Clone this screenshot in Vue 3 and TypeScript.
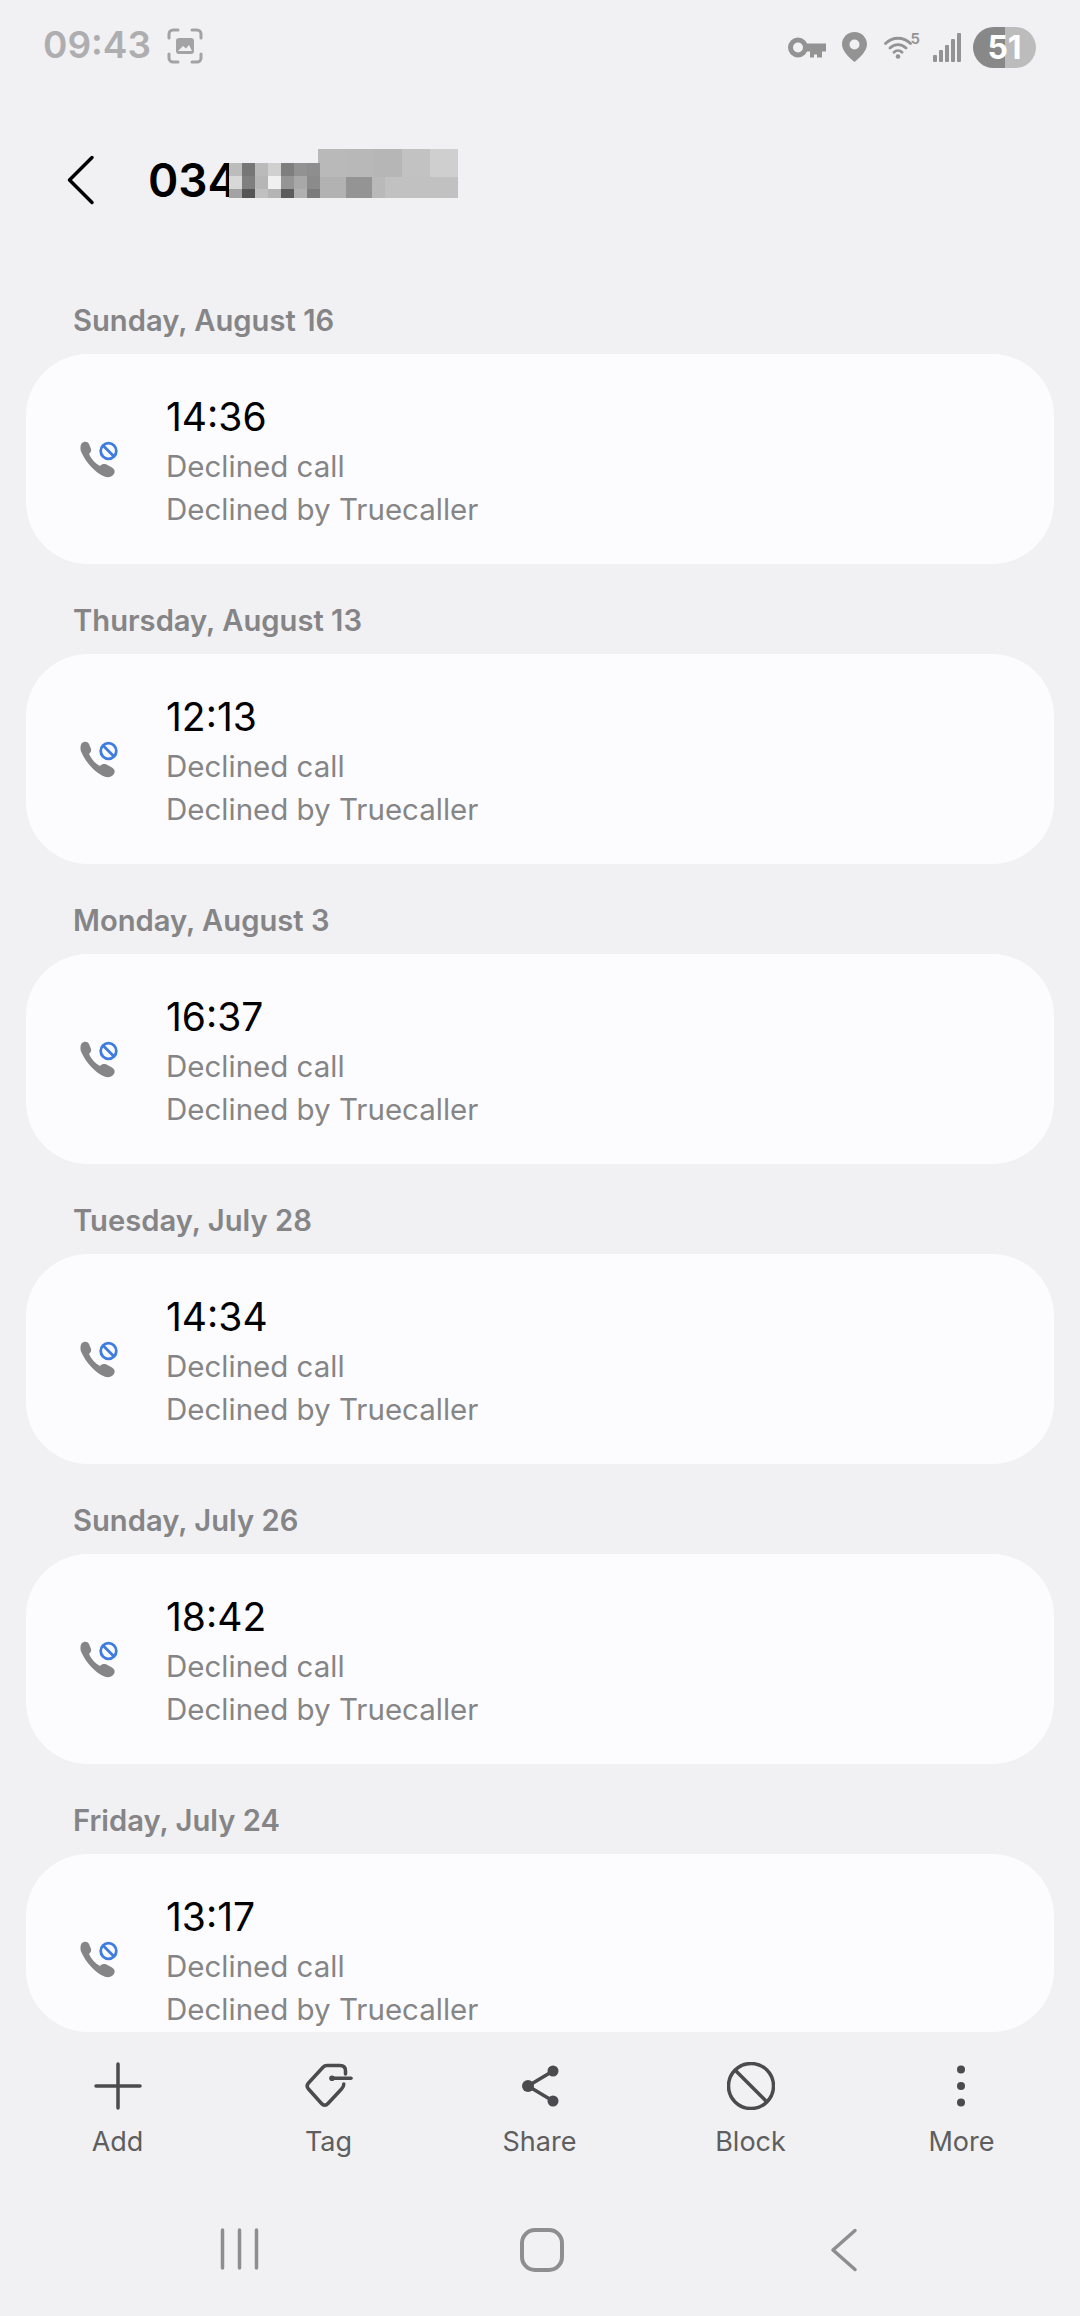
<template>
  <div class="screen">
    <!-- status bar -->
    <div class="status">
      <span class="clock">09:43</span>
      <svg class="shot" width="36" height="36" viewBox="0 0 36 36" fill="none" stroke="#a3a3a5" stroke-width="3" stroke-linecap="round">
        <path d="M2 10V6a4 4 0 0 1 4-4h5M25 2h5a4 4 0 0 1 4 4v4M34 26v4a4 4 0 0 1-4 4h-5M11 34H6a4 4 0 0 1-4-4v-4" />
        <rect x="9" y="10" width="18" height="16" rx="3" fill="#a3a3a5" stroke="none" />
        <path d="M11 23l5-5 3 2.500 3-3.500 3 6z" fill="#f1f1f3" stroke="none" />
      </svg>
      <div class="status-right">
        <svg width="38" height="21" viewBox="0 0 38 21" fill="none">
          <circle cx="10" cy="10.500" r="7.500" stroke="#939393" stroke-width="5" />
          <path d="M17 6.500h21v8h-4v6h-5v-3h-3v3h-4v-6h-5z" fill="#939393" />
        </svg>
        <svg width="25" height="30" viewBox="0 0 25 30">
          <path fill-rule="evenodd" d="M12.500 0C5.600 0 0 5.500 0 12.300 0 19 7 25.500 12.500 30 18 25.500 25 19 25 12.300 25 5.500 19.400 0 12.500 0zm0 7.500a5 5 0 1 1 0 10 5 5 0 0 1 0-10z" fill="#939393" />
        </svg>
        <div class="wifi">
          <svg width="28" height="24" viewBox="0 0 28 24" fill="none" stroke="#939393" stroke-width="2.800" stroke-linecap="round">
            <path d="M1.500 8.500C8.500 1.500 19.500 1.500 26.500 8.500M6 13c4.500-4.500 11.500-4.500 16 0M10 17.200c2.300-2.200 5.700-2.200 8 0" />
            <circle cx="14" cy="21.500" r="2.300" fill="#939393" stroke="none" />
          </svg>
          <span class="wifi-5">5</span>
        </div>
        <svg class="signal" width="28" height="29" viewBox="0 0 28 29">
          <rect x="0" y="22" width="4" height="7" rx="1" />
          <rect x="6" y="17" width="4" height="12" rx="1" />
          <rect x="12" y="12" width="4" height="17" rx="1" />
          <rect x="18" y="6" width="4" height="23" rx="1" />
          <rect x="24" y="0" width="4" height="29" rx="1" />
        </svg>
        <div class="battery"><span>51</span></div>
      </div>
    </div>

    <!-- app bar -->
    <div class="appbar">
      <svg class="back" width="28" height="50" viewBox="0 0 28 50" fill="none" stroke="#000" stroke-width="3.500" stroke-linecap="round" stroke-linejoin="round">
        <path d="M25 2.500 2.500 25 25 47.500" />
      </svg>
      <div class="title">
        <span>034</span>
        <svg class="mosaic" width="229" height="49" viewBox="0 0 229 49" shape-rendering="crispEdges">
          <rect v-for="(b, i) in mosaic" :key="i" :x="b[0]" :y="b[1]" :width="b[2]" :height="b[3]" :fill="b[4]" />
        </svg>
      </div>
    </div>

    <!-- call log -->
    <div class="list">
      <template v-for="(day, i) in days" :key="day.date">
        <div class="date">{{ day.date }}</div>
        <div class="card" :class="{ cut: i === days.length - 1 }">
          <svg class="call-icon" width="40" height="38" viewBox="0 0 40 38">
            <path d="M1.500 2.500C4 0 7.500.3 9 3l2 5c.5 2 0 3-2 5 2.500 5 6 9.500 11 12 2-2 4-2.500 6.500-1.500l5.500 3c3 2 3.500 4.500 1.500 7s-5 3.300-8.500 2.300C15 32 5.500 21 .8 10 .3 7 .3 4.500 1.500 2.500z" fill="#858587" />
            <circle cx="28.500" cy="10" r="7.800" fill="none" stroke="#3f7de0" stroke-width="2.800" />
            <path d="M23 4.500 34 15.500" stroke="#3f7de0" stroke-width="2.800" />
          </svg>
          <div class="entry">
            <div class="time">{{ day.time }}</div>
            <div class="sub">Declined call</div>
            <div class="sub">Declined by Truecaller</div>
          </div>
        </div>
      </template>
    </div>

    <!-- bottom actions -->
    <div class="actions">
      <div class="action">
        <svg width="48" height="48" viewBox="0 0 48 48" fill="none" stroke="#4b4b4f" stroke-width="3.500" stroke-linecap="round">
          <path d="M24 2v44M2 24h44" />
        </svg>
        <span>Add</span>
      </div>
      <div class="action">
        <svg width="48" height="48" viewBox="0 0 48 48" fill="none" stroke="#4b4b4f" stroke-width="3.500" stroke-linecap="round" stroke-linejoin="round">
          <path d="M40.500 12V9c0-3.500-2-5.500-5.500-5.500H22c-1.500 0-2.800.5-4 1.800L3.500 21c-1.800 2-1.800 4 0 6l13 14.500c2 2.200 4.500 2.200 6.500 0L36.500 27c1.500-1.500 2.300-3 2.300-5" />
          <path d="M27 16.300h19" />
          <circle cx="27" cy="16.300" r="2.800" fill="#4b4b4f" stroke="none" />
        </svg>
        <span>Tag</span>
      </div>
      <div class="action">
        <svg width="48" height="48" viewBox="0 0 48 48" fill="#4b4b4f" stroke="#4b4b4f" stroke-width="3.500">
          <path d="M37 9 12 24l25 15" fill="none" />
          <circle cx="37" cy="9" r="5.500" stroke="none" />
          <circle cx="12" cy="24" r="6" stroke="none" />
          <circle cx="37" cy="39" r="5.500" stroke="none" />
        </svg>
        <span>Share</span>
      </div>
      <div class="action">
        <svg width="48" height="48" viewBox="0 0 48 48" fill="none" stroke="#4b4b4f" stroke-width="3.500">
          <circle cx="24" cy="24" r="22.500" />
          <path d="M8 8l32 32" />
        </svg>
        <span>Block</span>
      </div>
      <div class="action">
        <svg width="48" height="48" viewBox="0 0 48 48" fill="#4b4b4f">
          <circle cx="23" cy="7.500" r="4" />
          <circle cx="23" cy="24" r="4" />
          <circle cx="23" cy="40.500" r="4" />
        </svg>
        <span>More</span>
      </div>
    </div>

    <!-- navigation bar -->
    <div class="navbar">
      <svg width="40" height="42" viewBox="0 0 40 42" stroke="#8e8e90" stroke-width="3.500" stroke-linecap="round">
        <path d="M2.500 2v38M19.500 2v38M36.500 2v38" />
      </svg>
      <svg width="44" height="44" viewBox="0 0 44 44" fill="none" stroke="#8e8e90" stroke-width="4">
        <rect x="2" y="2" width="40" height="40" rx="13" />
      </svg>
      <svg width="28" height="44" viewBox="0 0 28 44" fill="none" stroke="#8e8e90" stroke-width="3.500" stroke-linecap="round" stroke-linejoin="round">
        <path d="M25 2.500 3 22l22 19.500" />
      </svg>
    </div>
  </div>
</template>

<script setup lang="ts">
const days = [
  { date: 'Sunday, August 16', time: '14:36' },
  { date: 'Thursday, August 13', time: '12:13' },
  { date: 'Monday, August 3', time: '16:37' },
  { date: 'Tuesday, July 28', time: '14:34' },
  { date: 'Sunday, July 26', time: '18:42' },
  { date: 'Friday, July 24', time: '13:17' },
]

type Block = [number, number, number, number, string]

// censored part of the number: [x, y, w, h, colour]
const small = [
  ['#bcbcbc', '#767676', '#bababa', '#d0d0d0', '#7e7e7e', '#929292', '#8e8e8e'],
  ['#d8d8d8', '#7f7f7f', '#b6b6b6', '#f0f0f0', '#959595', '#a8a8a8', '#8b8b8b'],
  ['#a3a3a3', '#555555', '#c0c0c0', '#b4b4b4', '#5c5c5c', '#b0b0b0', '#7c7c7c'],
]
const mosaic: Block[] = [
  [89, 0, 28, 28, '#b9b9ba'],
  [117, 0, 28, 28, '#b8b8b9'],
  [145, 0, 28, 28, '#b6b6b7'],
  [173, 0, 28, 28, '#c2c2c3'],
  [201, 0, 28, 28, '#cfcfd0'],
  [91, 28, 26, 21, '#b2b2b3'],
  [117, 28, 26, 21, '#949495'],
  [143, 28, 13, 21, '#b9b9ba'],
  [156, 28, 73, 21, '#c1c1c2'],
]
small.forEach((row, r) => {
  row.forEach((c, i) => {
    mosaic.push([i * 13, 14 + r * 13, 13, r === 2 ? 9 : 13, c])
  })
})
</script>

<style>
html, body {
  margin: 0;
  background: #f1f1f3;
}
</style>

<style scoped>
.screen {
  width: 1080px;
  height: 2316px;
  display: flex;
  flex-direction: column;
  overflow: hidden;
  background: #f1f1f3;
  font-family: Inter, "Noto Sans", sans-serif;
}

.status {
  height: 64px;
  flex-shrink: 0;
  display: flex;
  align-items: flex-end;
  padding: 0 44px 0 43px;
}
.clock {
  font-size: 37px;
  line-height: 44px;
  font-weight: 600;
  color: #aeaeb0;
  margin-bottom: -3px;
}
.shot {
  margin-left: 16px;
  margin-bottom: 0;
}
.status-right {
  margin-left: auto;
  display: flex;
  align-items: center;
  height: 42px;
  margin-bottom: -4px;
}
.status-right > svg:first-child { margin-right: 16px; }
.status-right > svg:nth-child(2) { margin-right: 17px; }
.wifi {
  position: relative;
  width: 34px;
  height: 24px;
  margin-right: 15px;
}
.wifi-5 {
  position: absolute;
  top: -4px;
  right: -2px;
  font-size: 15px;
  line-height: 15px;
  font-weight: 600;
  color: #939393;
}
.signal { fill: #939393; margin-right: 12px; }
.battery {
  width: 63px;
  height: 41px;
  border-radius: 21px;
  background: linear-gradient(90deg, #888889 0, #888889 32px, #bcbcbd 32px);
  color: #fff;
  font-size: 32px;
  font-weight: 700;
  line-height: 41px;
  text-align: center;
}

.appbar {
  height: 200px;
  flex-shrink: 0;
  box-sizing: border-box;
  padding: 32px 0 0 67px;
  display: flex;
  align-items: center;
}
.title {
  position: relative;
  margin-left: 53px;
  font-size: 46px;
  line-height: 56px;
  font-weight: 600;
  color: #000;
  display: flex;
}
.mosaic {
  position: absolute;
  left: 81px;
  top: -3px;
}

.list {
  flex: 1;
  min-height: 0;
  overflow: hidden;
  padding: 0 26px;
}
.date {
  height: 90px;
  box-sizing: border-box;
  padding: 39px 0 15px 47px;
  font-size: 29.2px;
  line-height: 36px;
  font-weight: 600;
  color: #858587;
}
.card {
  height: 210px;
  box-sizing: border-box;
  background: #fcfcfe;
  border-radius: 62px;
  padding: 39px 0 0 54px;
  display: flex;
  align-items: flex-start;
  overflow: hidden;
}
.card.cut { height: 178px; }
.call-icon {
  margin-top: 48px;
  flex-shrink: 0;
}
.entry { margin-left: 46px; }
.time {
  font-size: 39px;
  line-height: 48px;
  color: #000;
  margin-bottom: 4px;
}
.sub {
  font-size: 29.5px;
  line-height: 43.3px;
  color: #858587;
}

.actions {
  height: 152px;
  flex-shrink: 0;
  display: grid;
  grid-template-columns: repeat(5, 211px);
  padding: 30px 0 0 12px;
  box-sizing: border-box;
}
.action {
  display: flex;
  flex-direction: column;
  align-items: center;
}
.action span {
  margin-top: 15px;
  font-size: 27px;
  line-height: 34px;
  color: #5e5e60;
}

.navbar {
  height: 132px;
  flex-shrink: 0;
  box-sizing: border-box;
  padding: 44px 0 0 89px;
  display: grid;
  grid-template-columns: repeat(3, 302px);
  justify-items: center;
  align-items: start;
}
</style>
